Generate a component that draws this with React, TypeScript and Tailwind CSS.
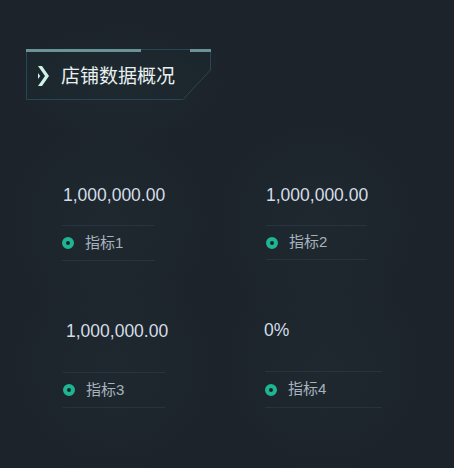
import React from "react";

type CardProps = {
  value: string;
  label: string;
  className: string;
  valueClass: string;
  rowClass: string;
};

const Card: React.FC<CardProps> = ({ value, label, className, valueClass, rowClass }) => {
  return (
    <div className={`relative ${className}`}>
      <div className="pointer-events-none absolute left-1/2 top-1/2 w-[220px] h-[220px] -translate-x-1/2 -translate-y-1/2 rounded-full bg-[radial-gradient(circle,rgba(36,48,54,0.4)_0%,rgba(28,35,43,0)_70%)]"></div>
      <div className={`relative text-[17.5px] leading-[20px] text-[#d3dde6] ${valueClass}`}>{value}</div>
      <div className={`relative flex items-center border-t border-b border-[#263440] ${rowClass}`}>
        <div className="w-[12px] h-[12px] rounded-full border-[4px] border-[#1db592] bg-[#1c232b]"></div>
        <span className="ml-[11px] text-[15px] text-[#a6b3be]">{label}</span>
      </div>
    </div>
  );
};

export default function App() {
  return (
    <div
      className="w-[454px] h-[468px] overflow-hidden bg-[#1c232b] flex flex-col"
      style={{ fontFamily: '"Liberation Sans", Arial, "Noto Sans CJK SC", sans-serif' }}
    >
      {/* title */}
      <div className="relative mt-[49px] ml-[26px] w-[185px] h-[51px] flex items-center">
        <div className="pointer-events-none absolute left-[-20px] top-[-30px] w-[230px] h-[130px] rounded-full bg-[radial-gradient(ellipse,rgba(36,48,54,0.4)_0%,rgba(28,35,43,0)_70%)]"></div>
        <svg className="absolute inset-0" width="185" height="51" viewBox="0 0 185 51">
          <path d="M0.5 0.5 H184.5 V21 L157 50.5 H0.5 Z" fill="rgba(30,42,48,0.35)" stroke="#284752" strokeWidth="1" />
          <rect x="0" y="0" width="115" height="3" fill="#6a9398" />
          <rect x="164" y="0" width="21" height="3" fill="#6a9398" />
        </svg>
        <svg className="relative ml-[12px] mt-[2px]" width="11" height="20" viewBox="0 0 11 20">
          <path d="M0 0 H4 L11 10 L4 20 H0 L7 10 Z" fill="#cdf3e6" />
          <path d="M0 7 L2.2 10 L0 13 Z" fill="#cdf3e6" />
        </svg>
        <span
          className="relative ml-[12px] text-[19px] leading-none text-[#e8f1ef]"
          style={{ fontFamily: '"Noto Sans CJK SC", sans-serif' }}
        >
          店铺数据概况
        </span>
      </div>

      {/* row 1 */}
      <div className="flex items-start mt-[85px] pl-[62px]">
        <Card
          value="1,000,000.00"
          label="指标1"
          className="w-[93px]"
          valueClass="pl-px mb-[20px]"
          rowClass="h-[36px]"
        />
        <Card
          value="1,000,000.00"
          label="指标2"
          className="ml-[111px] w-[101px]"
          valueClass="mb-[20px]"
          rowClass="h-[35px]"
        />
      </div>

      {/* row 2 */}
      <div className="flex items-start mt-[60px] pl-[63px]">
        <Card
          value="1,000,000.00"
          label="指标3"
          className="w-[102px]"
          valueClass="pl-[3px] mb-[31px]"
          rowClass="h-[36px]"
        />
        <Card
          value="0%"
          label="指标4"
          className="ml-[100px] w-[117px] -mt-px"
          valueClass="-ml-px mb-[31px]"
          rowClass="h-[37px]"
        />
      </div>
    </div>
  );
}
